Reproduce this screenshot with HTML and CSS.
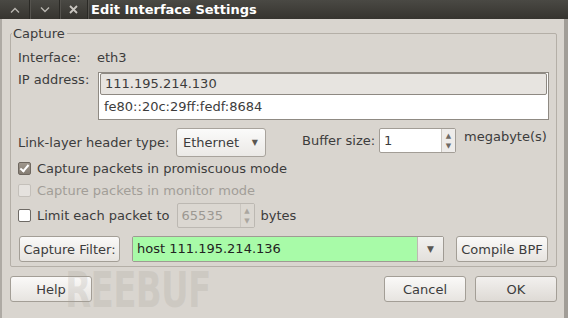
FILE: index.html
```html
<!DOCTYPE html>
<html lang="en">
	<head>
		<meta charset="utf-8">
		<title>Edit Interface Settings</title>
		<link rel="stylesheet" href="styles.css">
	</head>
	<body>
		<div class="window">
			<div class="titlebar">
				<span class="tb-btn">
					<svg width="10" height="6" viewBox="0 0 10 6"><path d="M1 5.5 L5 1.5 L9 5.5" fill="none" stroke="#b9b6b0" stroke-width="1.4"/></svg>
				</span>
				<span class="tb-btn">
					<svg width="10" height="6" viewBox="0 0 10 6"><path d="M1 0.5 L5 4.5 L9 0.5" fill="none" stroke="#b9b6b0" stroke-width="1.4"/></svg>
				</span>
				<span class="tb-btn">
					<svg width="9" height="9" viewBox="0 0 9 9"><path d="M1 1 L8 8 M8 1 L1 8" fill="none" stroke="#c9c6c0" stroke-width="1.8"/></svg>
				</span>
				<span class="title">Edit Interface Settings</span>
			</div>

			<div class="dialog">
				<fieldset class="frame">
					<legend>Capture</legend>

					<div class="row row-interface">
						<span class="label label-col">Interface:</span>
						<span class="label">eth3</span>
					</div>

					<div class="row row-ip">
						<span class="label label-col ip-label">IP address:</span>
						<div class="addr-list">
							<div class="addr selected">111.195.214.130</div>
							<div class="addr">fe80::20c:29ff:fedf:8684</div>
						</div>
					</div>

					<div class="row row-link">
						<span class="label link-label">Link-layer header type:</span>
						<div class="combo">
							<span>Ethernet</span>
							<span class="arrow">&#9660;</span>
						</div>
						<span class="label buffer-label">Buffer size:</span>
						<div class="spin">
							<span class="spin-value">1</span>
							<span class="spin-arrows"><i>&#9650;</i><i>&#9660;</i></span>
						</div>
						<span class="label unit">megabyte(s)</span>
					</div>

					<label class="row check">
						<input type="checkbox" checked>
						<span>Capture packets in promiscuous mode</span>
					</label>
					<label class="row check disabled">
						<input type="checkbox" disabled>
						<span>Capture packets in monitor mode</span>
					</label>
					<label class="row check row-limit">
						<input type="checkbox">
						<span>Limit each packet to</span>
						<div class="spin spin-disabled">
							<span class="spin-value">65535</span>
							<span class="spin-arrows"><i>&#9650;</i><i>&#9660;</i></span>
						</div>
						<span class="bytes">bytes</span>
					</label>

					<div class="row row-filter">
						<button class="btn btn-filter">Capture Filter:</button>
						<div class="filter-combo">
							<span class="filter-text">host 111.195.214.136</span>
							<span class="filter-arrow">&#9660;</span>
						</div>
						<button class="btn btn-bpf">Compile BPF</button>
					</div>
				</fieldset>

				<div class="actions">
					<button class="btn btn-wide">Help</button>
					<span class="spacer"></span>
					<button class="btn btn-wide">Cancel</button>
					<button class="btn btn-wide">OK</button>
				</div>
			</div>

			<div class="watermark">
				<span class="wm-bar wm-green"></span>
				<span class="wm-bar"></span>
				<span class="wm-text">REEBUF</span>
			</div>
		</div>
	</body>
</html>
```

FILE: styles.css
```css
* {
	box-sizing: border-box;
}
body {
	margin: 0;
	width: 568px;
	height: 318px;
	overflow: hidden;
	font-family: 'DejaVu Sans', sans-serif;
	font-size: 13px;
	color: #3c3c3c;
	background-color: #d9d5cf;
}
.window {
	position: relative;
	height: 318px;
	border-left: 2px solid #aeaaa4;
	border-right: 4px solid #a19d97;
}

/* title bar */
.titlebar {
	height: 19px;
	margin-left: -2px;
	margin-right: -4px;
	display: flex;
	align-items: center;
	background: linear-gradient(#4a4944, #36342f);
}
.tb-btn {
	width: 30px;
	height: 19px;
	display: flex;
	align-items: center;
	justify-content: center;
	border-right: 1px solid #2a2925;
	box-shadow: 1px 0 0 #55534e;
}
.tb-btn:nth-child(3) {
	width: 28px;
}
.title {
	margin-left: 3px;
	color: #ffffff;
	font-weight: bold;
	font-size: 13px;
}

/* dialog body */
.dialog {
	padding: 7px 7px 0 8px;
}
.frame {
	margin: 0;
	padding: 0 7px 4px 7px;
	border: 1px solid #b4afa7;
	border-radius: 2px;
	min-width: 0;
}
.frame legend {
	padding: 0 2px 0 1px;
	margin-left: -6px;
	line-height: 15px;
	color: #3c3c3c;
}
.row {
	display: flex;
	align-items: center;
}
.label {
	line-height: 17px;
	white-space: nowrap;
}
.label-col {
	width: 79px;
	flex: none;
}

.row-interface {
	margin-top: 8px;
}

.row-ip {
	margin-top: 6px;
	align-items: flex-start;
}
.ip-label {
	margin-top: -1px;
}
.addr-list {
	width: 451px;
	height: 48px;
	margin-left: 1px;
	background-color: #ffffff;
	border: 1px solid #8f8a83;
}
.addr {
	height: 23px;
	line-height: 23px;
	padding-left: 4px;
	margin: 0 1px;
}
.addr.selected {
	height: 22px;
	line-height: 20px;
	background-color: #e7e4e0;
	border: 1px solid #8e8982;
	border-radius: 2px;
}

.row-link {
	margin-top: 7px;
	align-items: flex-start;
}
.link-label {
	width: 158px;
	margin-top: 7px;
}
.combo {
	width: 90px;
	height: 29px;
	margin-top: 1px;
	padding: 0 7px 0 6px;
	display: flex;
	align-items: center;
	justify-content: space-between;
	background: linear-gradient(#fbfbfa, #ebe9e6);
	border: 1px solid #a8a39c;
	border-radius: 3px;
}
.arrow, .filter-arrow {
	font-size: 8px;
	color: #5a5752;
}
.buffer-label {
	margin-left: 36px;
	width: 77px;
	margin-top: 5px;
}
.spin {
	width: 77px;
	height: 25px;
	margin-top: 1px;
	display: flex;
	background-color: #ffffff;
	border: 1px solid #a29d96;
	border-radius: 2px;
}
.spin-value {
	flex: 1;
	padding-left: 4px;
	line-height: 23px;
}
.spin-arrows {
	width: 14px;
	display: flex;
	flex-direction: column;
	justify-content: center;
	align-items: center;
	background-color: #eeecea;
	border-left: 1px solid #c9c5bf;
	font-size: 7px;
	line-height: 10px;
	color: #6e6a65;
}
.spin-arrows i {
	font-style: normal;
}
.unit {
	margin-left: 8px;
	margin-top: 3px;
	line-height: 14px;
}

/* check rows */
.check {
	height: 18px;
	margin-top: 2px;
	white-space: nowrap;
}
.check + .check {
	margin-top: 4px;
}
.check input {
	-webkit-appearance: none;
	appearance: none;
	width: 13px;
	height: 13px;
	margin: 0 6px 0 0;
	background-color: #ffffff;
	border: 1px solid #6e6a65;
	border-radius: 2px;
	position: relative;
}
.check input:checked {
	background: linear-gradient(#9f978d, #857d73);
	border-color: #6e675f;
}
.check input:checked:after {
	content: '';
	position: absolute;
	left: 3px;
	top: 0;
	width: 3px;
	height: 7px;
	border: solid #ffffff;
	border-width: 0 2px 2px 0;
	transform: rotate(40deg);
}
.check input:disabled {
	background-color: #e5e2de;
	border-color: #c4c0ba;
}
.check.disabled {
	color: #a29e98;
}
.row-limit.check {
	height: 25px;
}
.spin-disabled {
	width: 78px;
	margin: 0 6px 0 7px;
	background-color: #dbd7d1;
	border-color: #bcb8b2;
	color: #9c9892;
}
.spin-disabled .spin-arrows {
	background-color: #dbd7d1;
	border-left-color: #c9c5bf;
	color: #aaa69f;
}

/* filter row */
.row-filter {
	margin-top: 8px;
	height: 26px;
}
.btn {
	font-family: 'DejaVu Sans', sans-serif;
	font-size: 13px;
	color: #3c3c3c;
	height: 26px;
	padding: 0;
	background: linear-gradient(#faf9f8, #e7e4e0);
	border: 1px solid #a39e96;
	border-radius: 3px;
}
.btn-filter {
	width: 101px;
	margin-left: 1px;
}
.filter-combo {
	width: 312px;
	height: 26px;
	margin-left: 12px;
	display: flex;
	border: 1px solid #9f9a93;
	border-radius: 2px;
}
.filter-text {
	flex: 1;
	padding-left: 4px;
	line-height: 24px;
	color: #222222;
	background-color: #a8fba8;
}
.filter-arrow {
	width: 26px;
	display: flex;
	align-items: center;
	justify-content: center;
	background: linear-gradient(#f2f1ef, #e3e0dc);
	border-left: 1px solid #bdb9b3;
	font-size: 9px;
}
.btn-bpf {
	width: 92px;
	margin-left: 12px;
}

/* bottom buttons */
.actions {
	display: flex;
	gap: 9px;
	margin-top: 9px;
}
.spacer {
	flex: 1;
}
.btn-wide {
	width: 82px;
}
.actions .btn:last-child {
	background: linear-gradient(#f2f0ee, #dedad5);
}

/* FREEBUF watermark */
.watermark {
	position: absolute;
	left: 16px;
	top: 269px;
	width: 200px;
	height: 43px;
	display: flex;
	align-items: stretch;
	pointer-events: none;
}
.wm-bar {
	width: 7px;
	margin-right: 5px;
	background-color: rgba(150, 190, 160, 0.35);
}
.wm-bar:nth-child(2) {
	background-color: rgba(170, 175, 165, 0.3);
	margin-right: 42px;
}
.wm-text {
	font-family: 'DejaVu Sans Condensed', 'DejaVu Sans', sans-serif;
	font-weight: bold;
	font-size: 50px;
	line-height: 43px;
	letter-spacing: -1px;
	color: rgba(165, 160, 152, 0.22);
	transform: scaleX(0.76);
	transform-origin: left center;
}
```
